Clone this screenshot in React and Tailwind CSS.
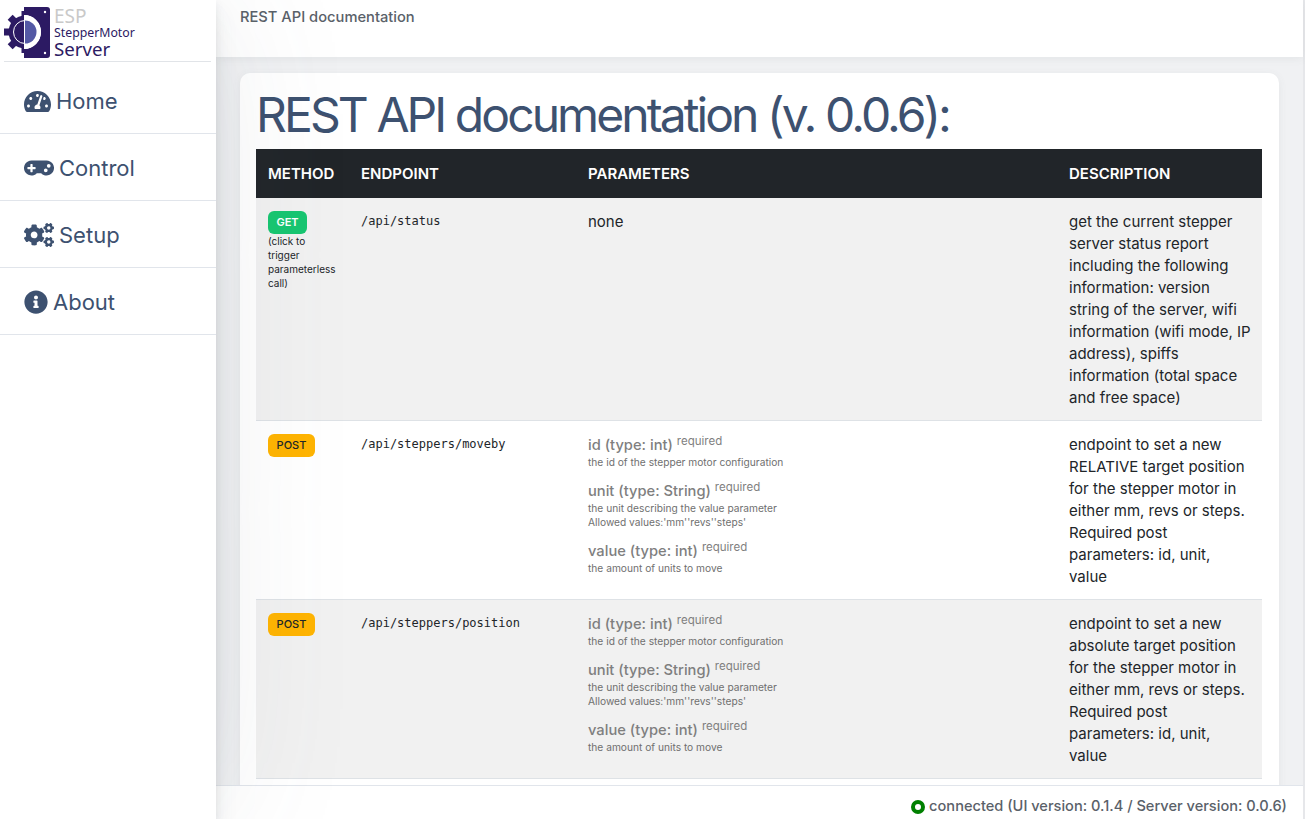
import React from 'react';
import { FaTachometerAlt, FaGamepad, FaCogs, FaInfoCircle } from 'react-icons/fa';

const navItems = [
  { label: 'Home', Icon: FaTachometerAlt, iconClass: 'w-[27px] h-[27px]' },
  { label: 'Control', Icon: FaGamepad, iconClass: 'w-[30px] h-[30px]' },
  { label: 'Setup', Icon: FaCogs, iconClass: 'w-[30px] h-[30px]' },
  { label: 'About', Icon: FaInfoCircle, iconClass: 'w-[24px] h-[24px]' },
];

function Param({ name, lines }) {
  return (
    <div className="mb-[12px] last:mb-0">
      <div className="text-[14.7px] leading-[20px] font-medium text-[#7f7f7f]">
        {name} <span className="text-[11.5px] font-normal relative top-[-5px]">required</span>
      </div>
      <div className="-mt-[1px]">
        {lines.map((l) => (
          <div key={l} className="text-[10.2px] leading-[14px] text-[#6f6f6f]">{l}</div>
        ))}
      </div>
    </div>
  );
}

const moveParams = (
  <div className="mt-[1px]">
    <Param name="id (type: int)" lines={['the id of the stepper motor configuration']} />
    <Param name="unit (type: String)" lines={['the unit describing the value parameter', "Allowed values:'mm''revs''steps'"]} />
    <Param name="value (type: int)" lines={['the amount of units to move']} />
  </div>
);

function Logo() {
  return (
    <div className="flex items-start h-[62px] border-b border-[#e1e4e8] ml-[4px] w-[207px]">
      <svg viewBox="4 0 48 61" className="w-[48px] h-[61px] shrink-0">
        <defs>
          <clipPath id="gearHalf">
            <rect x="0" y="0" width="24" height="61" />
          </clipPath>
        </defs>
        {/* gear, left half */}
        <g fill="#2c1a63" clipPath="url(#gearHalf)">
          <circle cx="25" cy="32" r="16.500" />
          {[-90, -45, 0, -135, 180, 45].map((a) => (
            <rect key={a} x="21.500" y="11" width="7" height="8" transform={`rotate(${a} 25 32)`} />
          ))}
        </g>
        <circle cx="25" cy="32" r="11.500" fill="none" stroke="#fff" strokeWidth="1" />
        {/* body with round cut-out */}
        <path fill="#2c1a63" d="M24 7h23a3 3 0 0 1 3 3v45a3 3 0 0 1-3 3H24v-9a17 17 0 0 0 0-34z" />
        <path fill="#fff" d="M24 15a17 17 0 0 1 0 34z" />
        <path fill="#5459a5" d="M25 20.500a11.500 11.500 0 0 1 0 23z" />
        <circle cx="45" cy="12" r="1.200" fill="#fff" />
        <circle cx="45" cy="53" r="1.200" fill="#fff" />
      </svg>
      <div className="flex flex-col ml-[2px] font-['Noto_Sans',sans-serif] text-[#2c1a63]">
        <span className="text-[19px] leading-[22px] mt-[5px] text-[#c9c9c9]">ESP</span>
        <span className="text-[12.300px] leading-[13px] -mt-[1px]">StepperMotor</span>
        <span className="text-[18.700px] leading-[22px] -mt-[1px]">Server</span>
      </div>
    </div>
  );
}

function Method({ type }) {
  const cls = type === 'GET' ? 'w-[39px] bg-[#17c671] text-white font-semibold' : 'w-[47px] bg-[#ffb400] text-[#212529] font-medium';
  return (
    <div className={`rounded-[6px] text-[11px] leading-[23px] h-[23px] text-center ${cls}`}>{type}</div>
  );
}

function Row({ striped, method, note, endpoint, params, description }) {
  return (
    <tr className={`${striped ? 'bg-[#f1f1f1]' : 'bg-white'} border-b border-[#dee2e6] align-top`}>
      <td className="px-[12px] pt-[13px] pb-[11px]">
        <Method type={method} />
        {note && <div className="text-[10px] leading-[14px] text-[#212529]">{note}</div>}
      </td>
      <td className="px-[12px] pt-[14px] font-['DejaVu_Sans_Mono',monospace] text-[12px] leading-[18px] text-[#212529]">{endpoint}</td>
      <td className="px-[12px] pt-[13px] pb-[11px] text-[15px] leading-[22px] text-[#212529]">{params}</td>
      <td className="pl-[12px] pr-[11px] pt-[13px] pb-[11px] text-[15px] leading-[22px] text-[#212529]">{description}</td>
    </tr>
  );
}

export default function App() {
  return (
    <div className="flex h-screen overflow-hidden bg-[#f0f1f3] font-['Inter',sans-serif]">
      <aside className="w-[216px] shrink-0 bg-white shadow-[0_2px_148px_rgba(90,97,105,0.11),0_4px_8px_rgba(90,97,105,0.12),0_15px_22px_rgba(90,97,105,0.1)] z-20">
        <Logo />
        <nav className="mt-[5px]">
          {navItems.map(({ label, Icon, iconClass }) => (
            <div key={label} className="flex items-center gap-[5px] h-[67px] pl-[24px] pt-[2px] border-b border-[#e1e5eb] text-[22px] text-[#3d5170]">
              <Icon className={iconClass} />
              <span>{label}</span>
            </div>
          ))}
        </nav>
      </aside>

      <div className="flex-1 flex flex-col min-w-0 border-r-2 border-[#e6e7ea]">
        <header className="h-[57px] shrink-0 bg-white pl-[24px] pt-[8px] text-[14.700px] leading-[18px] font-medium text-[#5a6169] shadow-[0_2px_8px_rgba(90,97,105,0.08)] z-10">
          REST API documentation
        </header>

        <main className="flex-1 min-h-0 overflow-hidden px-[24px] pt-[16px]">
          <div className="min-h-[800px] bg-white rounded-[10px] px-[16px] pt-[16px] shadow-[0_2px_8px_rgba(90,97,105,0.08)]">
            <h1 className="text-[48px] leading-[60px] mt-[-4px] mb-[4px] font-normal tracking-[-0.061em] text-[#3d5170] whitespace-nowrap">
              REST API documentation (v. 0.0.6):
            </h1>
            <table className="w-[1006px] table-fixed border-collapse">
              <thead>
                <tr className="bg-[#212529] text-white text-[15px] text-left h-[49px]">
                  <th className="w-[93px] pl-[12px] pt-[2px] font-semibold">METHOD</th>
                  <th className="w-[227px] pl-[12px] pt-[2px] font-semibold">ENDPOINT</th>
                  <th className="w-[481px] pl-[12px] pt-[2px] font-semibold">PARAMETERS</th>
                  <th className="pl-[12px] pt-[2px] font-semibold">DESCRIPTION</th>
                </tr>
              </thead>
              <tbody>
                <Row
                  striped
                  method="GET"
                  note="(click to trigger parameterless call)"
                  endpoint="/api/status"
                  params="none"
                  description="get the current stepper server status report including the following information: version string of the server, wifi information (wifi mode, IP address), spiffs information (total space and free space)"
                />
                <Row
                  method="POST"
                  endpoint="/api/steppers/moveby"
                  params={moveParams}
                  description="endpoint to set a new RELATIVE target position for the stepper motor in either mm, revs or steps. Required post parameters: id, unit, value"
                />
                <Row
                  striped
                  method="POST"
                  endpoint="/api/steppers/position"
                  params={moveParams}
                  description="endpoint to set a new absolute target position for the stepper motor in either mm, revs or steps. Required post parameters: id, unit, value"
                />
              </tbody>
            </table>
          </div>
        </main>

        <footer className="h-[34px] shrink-0 bg-white border-t border-[#e1e5eb] flex items-center justify-end gap-[4px] pt-[8px] pr-[16px] text-[14.600px] font-medium text-[#5a6169] z-10">
          <span className="w-[14px] h-[14px] rounded-full border-[4px] border-[#008000] bg-white" />
          <span>connected (UI version: 0.1.4 / Server version: 0.0.6)</span>
        </footer>
      </div>
    </div>
  );
}
